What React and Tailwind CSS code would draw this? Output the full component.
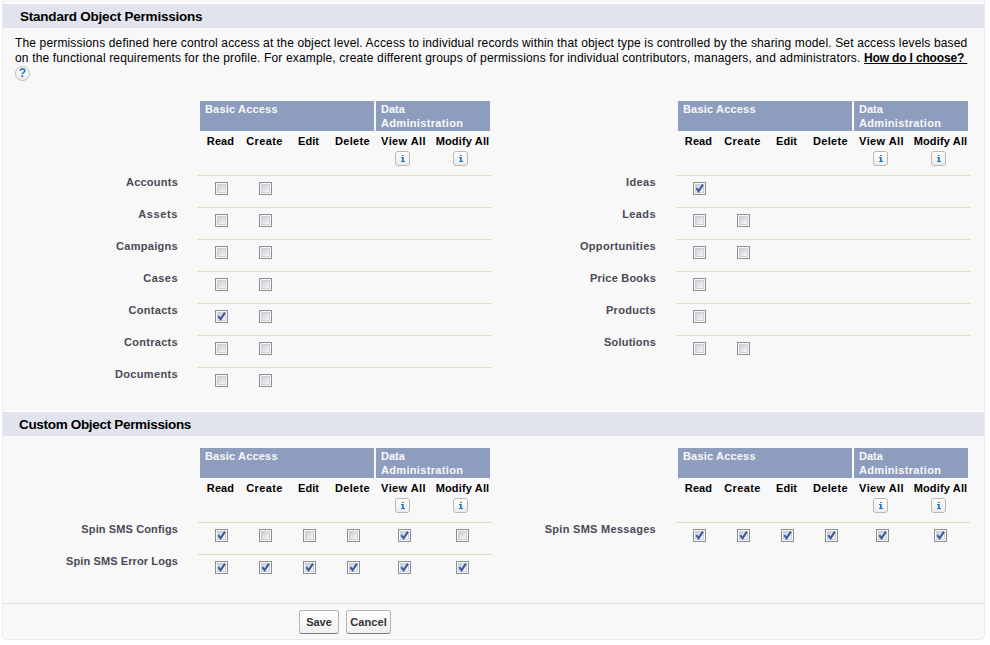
const U = 0; // unchecked
const C = 1; // checked

const standardLeft = [
  { label: 'Accounts', track: 'tracking-[0.24px]', boxes: [U, U] },
  { label: 'Assets', track: 'tracking-[0.6px]', boxes: [U, U] },
  { label: 'Campaigns', track: 'tracking-[0.3px]', boxes: [U, U] },
  { label: 'Cases', track: 'tracking-[0.45px]', boxes: [U, U] },
  { label: 'Contacts', track: 'tracking-[0.3px]', boxes: [C, U] },
  { label: 'Contracts', track: 'tracking-[0.3px]', boxes: [U, U] },
  { label: 'Documents', track: 'tracking-[0.35px]', boxes: [U, U] },
];

const standardRight = [
  { label: 'Ideas', track: 'tracking-[0.35px]', boxes: [C] },
  { label: 'Leads', track: 'tracking-[0.4px]', boxes: [U, U] },
  { label: 'Opportunities', track: 'tracking-[0.3px]', boxes: [U, U] },
  { label: 'Price Books', track: 'tracking-[0.22px]', boxes: [U] },
  { label: 'Products', track: 'tracking-[0.3px]', boxes: [U] },
  { label: 'Solutions', track: 'tracking-[0.2px]', boxes: [U, U] },
];

const customLeft = [
  { label: 'Spin SMS Configs', track: 'tracking-[0.12px]', boxes: [C, U, U, U, C, U] },
  { label: 'Spin SMS Error Logs', track: 'tracking-[0.1px]', boxes: [C, C, C, C, C, C] },
];

const customRight = [
  { label: 'Spin SMS Messages', track: 'tracking-[0.29px]', boxes: [C, C, C, C, C, C] },
];

const columns = [
  { name: 'Read', track: 'tracking-[0.1px]' },
  { name: 'Create', track: 'tracking-[0.4px]' },
  { name: 'Edit', track: 'tracking-[0px]' },
  { name: 'Delete', track: 'tracking-[0.36px]' },
  { name: 'View All', track: 'tracking-[0.4px]', info: true },
  { name: 'Modify All', track: 'tracking-[0.15px]', info: true },
];

const grid = 'grid w-[294px] grid-cols-[44px_44px_44px_44px_58px_60px]';

function Checkbox({ checked }) {
  return (
    <span
      role="checkbox"
      aria-checked={!!checked}
      className="block size-[13px] border border-[#8e8f8f] bg-[#f6f6f6] p-px"
    >
      <span className="block size-[9px] border border-[#cdd0d6] bg-linear-135 from-[#cbcfd5] to-[#f6f6f6]">
        {checked ? (
          <svg viewBox="0 0 9 9" className="-mt-px -ml-px block size-[9px]">
            <path d="M1.3 4.2 L3.6 7.2 L7.9 0.6" fill="none" stroke="#4058a0" strokeWidth="2.1" />
          </svg>
        ) : null}
      </span>
    </span>
  );
}

function InfoIcon() {
  return (
    <span className="ml-[21px] flex size-[15px] items-center justify-center rounded-[3px] border border-[#b9b9b9] bg-linear-to-b from-white to-[#ececec]">
      <svg viewBox="0 0 5 7" className="h-[7px] w-[5px]" fill="#1b74cf" shapeRendering="crispEdges">
        <rect x="2" y="0" width="1" height="1" />
        <rect x="1" y="2" width="1" height="1" />
        <rect x="2" y="2" width="1" height="4" />
        <rect x="3" y="0" width="1" height="1" opacity="0.7" />
        <rect x="3" y="2" width="1" height="4" opacity="0.7" />
        <rect x="1" y="6" width="4" height="1" />
      </svg>
    </span>
  );
}

function PermissionTable({ rows }) {
  return (
    <div className="w-[478px]">
      <div className="ml-[186px] flex h-[30px] gap-[2px] text-[11px] leading-[14px] font-bold text-[#f8f8f8]">
        <div className="w-[174px] bg-[#8e9dbe] pt-[1px] pl-[5px] tracking-[0.18px]">Basic Access</div>
        <div className="w-[114px] bg-[#8e9dbe] pt-[1px] pl-[5px]">
          <div className="tracking-[0px]">Data</div>
          <div className="tracking-[0.33px]">Administration</div>
        </div>
      </div>
      <div className={`${grid} ml-[184px] h-[44px] text-[11px] font-bold text-black`}>
        {columns.map((c) => (
          <div key={c.name} className="pt-[3px]">
            <div className={`pl-px text-center leading-[14px] whitespace-nowrap ${c.track}`}>{c.name}</div>
            {c.info ? (
              <div className="pt-[3px]">
                <InfoIcon />
              </div>
            ) : null}
          </div>
        ))}
      </div>
      {rows.map((r) => (
        <div key={r.label} className="flex h-8">
          <div
            className={`mr-5 w-[164px] text-right text-[11px] leading-[14px] font-bold text-[#4a4a56] ${r.track}`}
          >
            {r.label}
          </div>
          <div className={`${grid} border-t border-[#e0dcbe]`}>
            {r.boxes.map((b, i) => (
              <div key={i} className={i < 4 ? 'pt-[6px] pl-[17px]' : 'pt-[6px] pl-[24px]'}>
                <Checkbox checked={b} />
              </div>
            ))}
          </div>
        </div>
      ))}
    </div>
  );
}

function SectionTitle({ children, className }) {
  return (
    <h2
      className={`h-[25px] border-t border-white bg-[#e2e4ed] pt-px text-[13.5px] leading-[24px] font-bold text-black ${className}`}
    >
      {children}
    </h2>
  );
}

function Button({ children, className }) {
  return (
    <button
      className={`h-6 rounded-[3px] border border-[#b5b5b5] border-b-[#7f7f7f] bg-linear-to-b from-white to-[#f0f0f0] text-center text-[11px] leading-[22px] font-bold text-[#333] ${className}`}
    >
      {children}
    </button>
  );
}

export default function App() {
  return (
    <div className="h-[645px] w-[990px] overflow-hidden bg-white pl-[2px] font-['Liberation_Sans',Arial,sans-serif]">
      <div className="flex h-[640px] w-[983px] flex-col rounded-b-[5px] border border-t-0 border-[#eaeaea] bg-[#f8f8f8]">
        <div className="h-[408px] pt-[3px]">
          <SectionTitle className="pl-[17px] tracking-[-0.22px]">Standard Object Permissions</SectionTitle>
          <div className="pt-[8px] pl-[12px] text-[12px] leading-[15px] whitespace-nowrap text-black">
            <div className="tracking-[0.15px]">
              The permissions defined here control access at the object level. Access to individual records within that
              object type is controlled by the sharing model. Set access levels based
            </div>
            <div>
              <span className="tracking-[0.156px]">
                on the functional requirements for the profile. For example, create different groups of permissions for
                individual contributors, managers, and administrators.{' '}
              </span>
              <a className="font-bold tracking-[-0.16px] underline">How do I choose?&nbsp;</a>
            </div>
            <div className="flex size-[15px] items-center justify-center rounded-full border border-[#bdbdbd] bg-linear-to-b from-white to-[#ececec] text-[12px] leading-[13px] font-bold text-[#1b74cf]">
              ?
            </div>
          </div>
          <div className="flex pt-[20px] pl-[11px]">
            <PermissionTable rows={standardLeft} />
            <PermissionTable rows={standardRight} />
          </div>
        </div>
        <div className="h-[195px] pt-[3px]">
          <SectionTitle className="pl-4 tracking-[-0.32px]">Custom Object Permissions</SectionTitle>
          <div className="flex pt-[12px] pl-[11px]">
            <PermissionTable rows={customLeft} />
            <PermissionTable rows={customRight} />
          </div>
        </div>
        <div className="flex gap-[7px] border-t border-[#dbdbdb] pt-[6px] pl-[296px]">
          <Button className="w-10">Save</Button>
          <Button className="w-[45px] tracking-[0.1px]">Cancel</Button>
        </div>
      </div>
    </div>
  );
}
